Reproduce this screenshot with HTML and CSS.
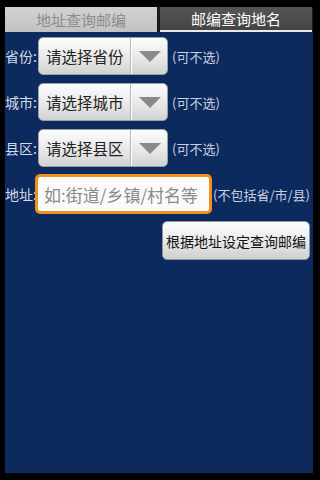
FILE: index.html
```html
<!DOCTYPE html>
<html lang="zh-CN">
    <head>
        <meta charset="UTF-8" />
        <meta name="viewport" content="width=device-width, initial-scale=1.0" />
        <title>邮编查询</title>
        <link rel="stylesheet" href="styles.css">
    </head>
    <body>
        <div class="screen">
            <div class="tabs">
                <div class="tab">地址查询邮编</div>
                <div class="tab active">邮编查询地名</div>
            </div>
            <div class="content">
                <div class="row">
                    <span class="label">省份:</span>
                    <div class="spinner">
                        <span class="spinner-text">请选择省份</span>
                        <span class="spinner-arrow"><span class="tri"></span></span>
                    </div>
                    <span class="hint">(可不选)</span>
                </div>
                <div class="row">
                    <span class="label">城市:</span>
                    <div class="spinner">
                        <span class="spinner-text">请选择城市</span>
                        <span class="spinner-arrow"><span class="tri"></span></span>
                    </div>
                    <span class="hint">(可不选)</span>
                </div>
                <div class="row">
                    <span class="label">县区:</span>
                    <div class="spinner">
                        <span class="spinner-text">请选择县区</span>
                        <span class="spinner-arrow"><span class="tri"></span></span>
                    </div>
                    <span class="hint">(可不选)</span>
                </div>
                <div class="row address">
                    <span class="label">地址:</span>
                    <input class="field" type="text" placeholder="如:街道/乡镇/村名等" />
                    <span class="hint">(不包括省/市/县)</span>
                </div>
                <div class="actions">
                    <button class="btn">根据地址设定查询邮编</button>
                </div>
            </div>
        </div>
    </body>
</html>
```

FILE: styles.css
```css
html, body {
    margin: 0;
    padding: 0;
    background: #000;
}

.screen {
    width: 320px;
    height: 480px;
    box-sizing: border-box;
    padding: 7px 7px 7px 5px;
    display: flex;
    flex-direction: column;
    font-family: "Noto Sans CJK SC", "Noto Sans", sans-serif;
}

.tabs {
    display: grid;
    grid-template-columns: 152px 152px;
    gap: 3px;
    height: 25px;
    background: #1a1a1a;
}

.tab {
    display: flex;
    align-items: center;
    justify-content: center;
    background: linear-gradient(#d2d2d2, #c2c2c2);
    color: #8c8c8c;
    font-size: 15px;
}

.tab.active {
    background: linear-gradient(#555, #444);
    color: #fff;
    border-bottom: 2px solid #e8e8e8;
}

.content {
    flex: 1;
    background: #0d2a5e;
    padding-top: 5px;
    display: flex;
    flex-direction: column;
    gap: 8px;
}

.row {
    display: flex;
    align-items: center;
    height: 38px;
}

.label {
    color: #d4dae6;
    font-size: 14px;
    width: 33px;
    white-space: nowrap;
}

.spinner {
    display: flex;
    width: 130px;
    height: 38px;
    box-sizing: border-box;
    border-radius: 5px;
    background: linear-gradient(#fdfdfd, #e6e6e6 60%, #d2d2d2);
    border: 1px solid #9aa0aa;
    margin-right: 4px;
}

.spinner-text {
    width: 92px;
    display: flex;
    align-items: center;
    padding-left: 7px;
    box-sizing: border-box;
    font-size: 15.5px;
    color: #222;
    border-right: 1px solid #b8b8b8;
    white-space: nowrap;
}

.spinner-arrow {
    flex: 1;
    display: flex;
    align-items: center;
    justify-content: center;
    border-left: 1px solid #fff;
}

.tri {
    width: 0;
    height: 0;
    border-left: 11px solid transparent;
    border-right: 11px solid transparent;
    border-top: 11px solid #8a8a8a;
}

.hint {
    color: #c8d0e0;
    font-size: 13px;
    white-space: nowrap;
}

.address {
    height: 40px;
    margin-top: -1px;
}

.address .label {
    width: 30px;
}

.field {
    width: 177px;
    height: 40px;
    box-sizing: border-box;
    border: 3px solid #f0901e;
    border-radius: 5px;
    background: #fbfbfb;
    font-family: inherit;
    font-size: 17px;
    padding: 0 0 0 6px;
    margin-right: 1px;
    outline: none;
}

.field::placeholder {
    color: #8a8a8a;
}

.actions {
    display: flex;
    justify-content: flex-end;
    padding-right: 3px;
    margin-top: -1px;
}

.btn {
    width: 148px;
    height: 39px;
    border-radius: 5px;
    border: 1px solid #8e949e;
    background: linear-gradient(#fdfdfd, #e8e8e8 55%, #cfcfcf);
    font-family: inherit;
    font-size: 14px;
    color: #111;
    padding: 0;
    white-space: nowrap;
}
```
